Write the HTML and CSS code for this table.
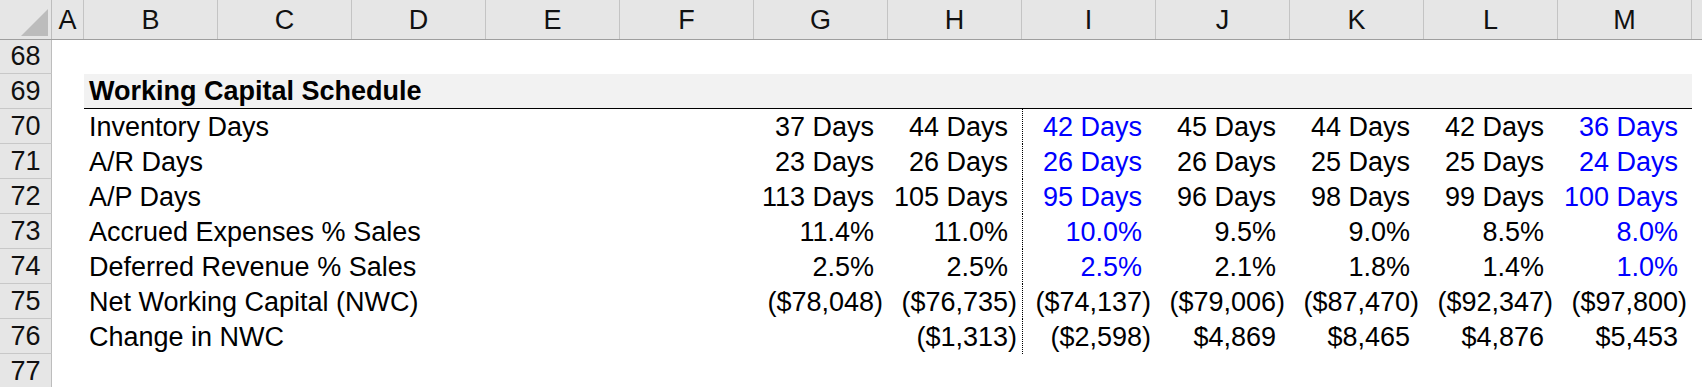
FILE: index.html
```html
<!DOCTYPE html>
<html>
<head>
<meta charset="utf-8">
<link rel="stylesheet" href="styles.css">
</head>
<body>
<div class="sheet">
  <div class="row colhead">
    <div class="corner"><svg class="tri" width="27" height="27" viewBox="0 0 27 27"><polygon points="27,0 27,27 0,27" fill="#bcbcbc"/></svg></div>
    <div class="ch">A</div><div class="ch">B</div><div class="ch">C</div><div class="ch">D</div>
    <div class="ch">E</div><div class="ch">F</div><div class="ch">G</div><div class="ch">H</div>
    <div class="ch">I</div><div class="ch">J</div><div class="ch">K</div><div class="ch">L</div>
    <div class="ch">M</div><div class="ch last"></div>
  </div>

  <div class="row first">
    <div class="rh">68</div>
  </div>

  <div class="row">
    <div class="rh">69</div>
    <div class="title">Working Capital Schedule</div>
  </div>

  <div class="row">
    <div class="rh">70</div>
    <div class="label">Inventory Days</div>
    <div class="num pos">37 Days</div><div class="num pos">44 Days</div>
    <div class="num pos blue div">42 Days</div><div class="num pos">45 Days</div>
    <div class="num pos">44 Days</div><div class="num pos">42 Days</div>
    <div class="num pos blue">36 Days</div>
  </div>

  <div class="row">
    <div class="rh">71</div>
    <div class="label">A/R Days</div>
    <div class="num pos">23 Days</div><div class="num pos">26 Days</div>
    <div class="num pos blue div">26 Days</div><div class="num pos">26 Days</div>
    <div class="num pos">25 Days</div><div class="num pos">25 Days</div>
    <div class="num pos blue">24 Days</div>
  </div>

  <div class="row">
    <div class="rh">72</div>
    <div class="label">A/P Days</div>
    <div class="num pos">113 Days</div><div class="num pos">105 Days</div>
    <div class="num pos blue div">95 Days</div><div class="num pos">96 Days</div>
    <div class="num pos">98 Days</div><div class="num pos">99 Days</div>
    <div class="num pos blue">100 Days</div>
  </div>

  <div class="row">
    <div class="rh">73</div>
    <div class="label">Accrued Expenses % Sales</div>
    <div class="num pos">11.4%</div><div class="num pos">11.0%</div>
    <div class="num pos blue div">10.0%</div><div class="num pos">9.5%</div>
    <div class="num pos">9.0%</div><div class="num pos">8.5%</div>
    <div class="num pos blue">8.0%</div>
  </div>

  <div class="row">
    <div class="rh">74</div>
    <div class="label">Deferred Revenue % Sales</div>
    <div class="num pos">2.5%</div><div class="num pos">2.5%</div>
    <div class="num pos blue div">2.5%</div><div class="num pos">2.1%</div>
    <div class="num pos">1.8%</div><div class="num pos">1.4%</div>
    <div class="num pos blue">1.0%</div>
  </div>

  <div class="row">
    <div class="rh">75</div>
    <div class="label">Net Working Capital (NWC)</div>
    <div class="num">($78,048)</div><div class="num">($76,735)</div>
    <div class="num div">($74,137)</div><div class="num">($79,006)</div>
    <div class="num">($87,470)</div><div class="num">($92,347)</div>
    <div class="num">($97,800)</div>
  </div>

  <div class="row">
    <div class="rh">76</div>
    <div class="label">Change in NWC</div>
    <div class="num"></div><div class="num">($1,313)</div>
    <div class="num div">($2,598)</div><div class="num pos">$4,869</div>
    <div class="num pos">$8,465</div><div class="num pos">$4,876</div>
    <div class="num pos">$5,453</div>
  </div>

  <div class="row">
    <div class="rh">77</div>
  </div>
</div>
</body>
</html>
```

FILE: styles.css
```css
html, body {
  margin: 0;
  padding: 0;
  background: #ffffff;
}

body {
  font-family: "Liberation Sans", Arial, sans-serif;
  font-size: 27px;
  color: #000000;
  overflow: hidden;
}

.sheet {
  width: 1702px;
}

.row {
  display: grid;
  grid-template-columns: 52px 32px repeat(12, 134px) 1fr;
  height: 35px;
}

.row.first {
  height: 34px;
}

.colhead {
  height: 40px;
  background: #e6e6e6;
  border-bottom: 1px solid #9e9e9e;
  box-sizing: border-box;
}

.corner {
  position: relative;
  border-right: 1px solid #bdbdbd;
  box-sizing: border-box;
}

.tri {
  position: absolute;
  right: 3px;
  bottom: 3px;
}

.ch {
  display: flex;
  align-items: center;
  justify-content: center;
  font-size: 27px;
  color: #111111;
  border-right: 1px solid #c4c4c4;
  box-sizing: border-box;
  padding-top: 1px;
}

.ch.last {
  border-right: none;
}

.rh {
  grid-column: 1;
  background: #e6e6e6;
  border-right: 1px solid #bdbdbd;
  border-bottom: 1px solid #c8c8c8;
  box-sizing: border-box;
  display: flex;
  align-items: flex-end;
  justify-content: center;
  line-height: 31px;
  padding-bottom: 1px;
  font-size: 27px;
  color: #111111;
}

.title {
  grid-column: 3 / 15;
  background: #f2f2f2;
  border-bottom: 1px solid #000000;
  box-sizing: border-box;
  font-weight: bold;
  display: flex;
  align-items: flex-end;
  line-height: 31px;
  padding: 0 0 1px 5px;
  white-space: nowrap;
}

.label {
  grid-column: 3 / 8;
  display: flex;
  align-items: flex-end;
  line-height: 31px;
  padding: 0 0 1px 5px;
  white-space: nowrap;
}

.num {
  display: flex;
  align-items: flex-end;
  justify-content: flex-end;
  line-height: 31px;
  padding: 0 5px 1px 0;
  white-space: nowrap;
  box-sizing: border-box;
}

.num.pos {
  padding-right: 14px;
}

.blue {
  color: #0000ff;
}

.div {
  border-left: 1px dotted #000000;
}
```
